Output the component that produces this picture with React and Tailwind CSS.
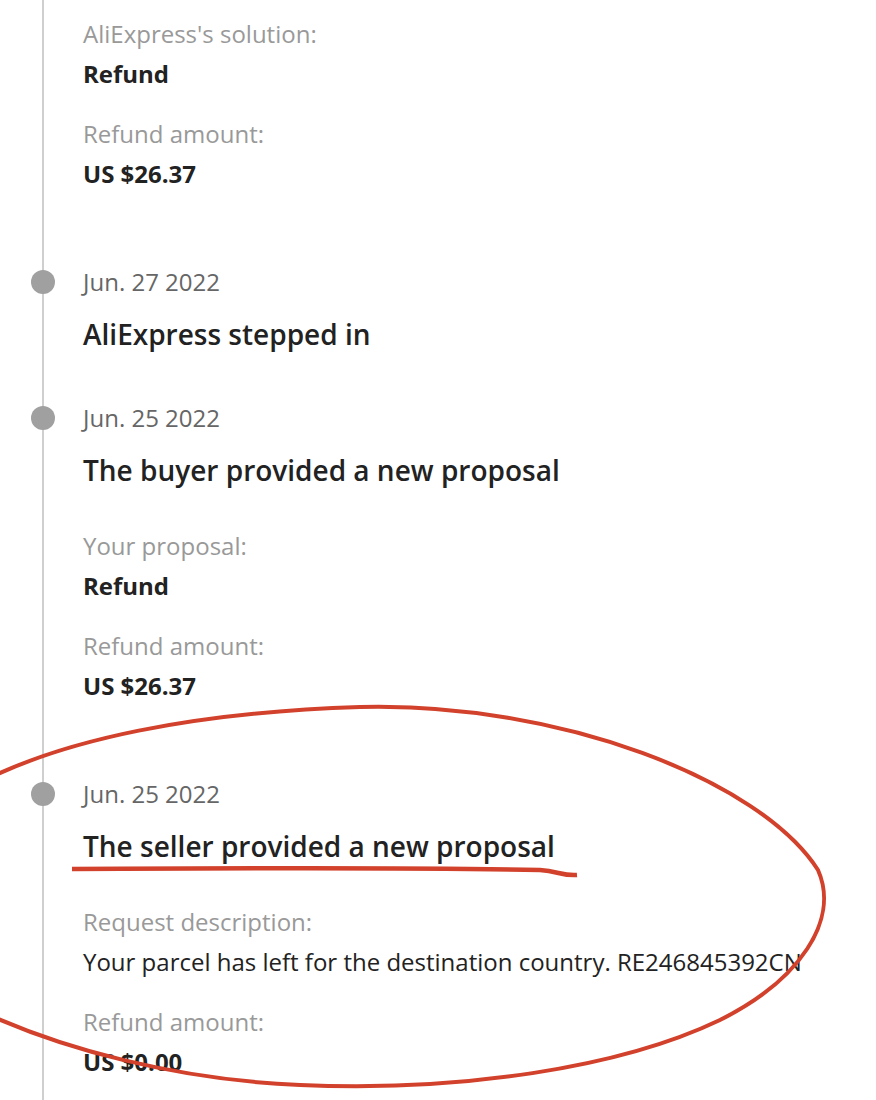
import React from 'react';

const font = { fontFamily: '"Open Sans", "Noto Sans", Arial, sans-serif' };

function Field({ label, value, bold = true }) {
  return (
    <div className="flex flex-col">
      <div className="text-[24px] leading-[40px] text-[#999]">{label}</div>
      <div className={`text-[24px] leading-[40px] text-[#222] ${bold ? 'font-bold' : 'font-normal'}`}>{value}</div>
    </div>
  );
}

function Fields({ items, className = '' }) {
  return (
    <div className={`flex flex-col gap-[20px] pb-[24px] ${className}`}>
      {items.map((f, i) => (
        <Field key={i} {...f} />
      ))}
    </div>
  );
}

function Event({ date, title, fields }) {
  return (
    <div className="flex flex-col">
      <div className="relative text-[24px] leading-[40px] text-[#666]">
        <span className="absolute left-[-52px] top-1/2 -translate-y-1/2 w-6 h-6 rounded-full bg-[#a0a0a0]" />
        {date}
      </div>
      <div className="mt-[12px] text-[28px] leading-[40px] font-semibold text-[#222]">{title}</div>
      {fields && <Fields items={fields} className="mt-[36px]" />}
    </div>
  );
}

export default function App() {
  return (
    <div className="relative w-[876px] h-[1100px] overflow-hidden bg-white" style={font}>
      <div className="ml-[42px] h-[1100px] border-l-2 border-[#cfcfcf] pl-[39px] pt-[14px] flex flex-col gap-[44px]">
        <Fields
          items={[
            { label: "AliExpress's solution:", value: 'Refund' },
            { label: 'Refund amount:', value: 'US $26.37' },
          ]}
        />
        <Event date="Jun. 27 2022" title="AliExpress stepped in" />
        <Event
          date="Jun. 25 2022"
          title="The buyer provided a new proposal"
          fields={[
            { label: 'Your proposal:', value: 'Refund' },
            { label: 'Refund amount:', value: 'US $26.37' },
          ]}
        />
        <Event
          date="Jun. 25 2022"
          title="The seller provided a new proposal"
          fields={[
            {
              label: 'Request description:',
              value: 'Your parcel has left for the destination country. RE246845392CN',
              bold: false,
            },
            { label: 'Refund amount:', value: 'US $0.00' },
          ]}
        />
      </div>

      {/* hand-drawn annotation */}
      <svg
        className="absolute inset-0 pointer-events-none"
        width="876"
        height="1100"
        viewBox="0 0 876 1100"
        fill="none"
      >
        <path
          d="M -30 788 C 60 738, 200 712, 360 707 C 560 702, 760 780, 818 870 C 840 920, 800 980, 720 1020 C 620 1068, 460 1092, 300 1085 C 180 1080, 60 1050, -30 1006"
          stroke="#d2412b"
          strokeWidth="4"
          strokeLinecap="round"
        />
        <path
          d="M 72 869 C 250 868, 450 868, 540 870 C 558 871, 562 876, 577 875"
          stroke="#d2412b"
          strokeWidth="4.5"
        />
      </svg>
    </div>
  );
}
